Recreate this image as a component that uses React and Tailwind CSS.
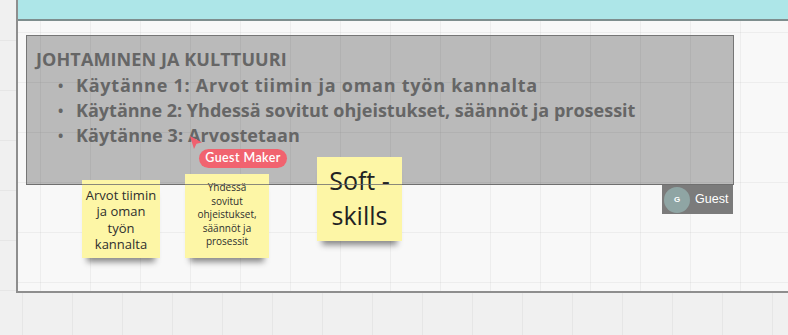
export default function App() {
  const grid =
    "bg-[linear-gradient(to_right,rgba(0,0,0,0.045)_1px,transparent_1px),linear-gradient(to_bottom,rgba(0,0,0,0.045)_1px,transparent_1px)] bg-size-[50px_50px] bg-position-[22px_40px]";
  const font = "font-['Open_Sans',sans-serif]";
  const items = [
    { t: "Käytänne 1: Arvot tiimin ja oman työn kannalta", c: "tracking-[0.75px]" },
    { t: "Käytänne 2: Yhdessä sovitut ohjeistukset, säännöt ja prosessit", c: "tracking-[0px]" },
    { t: "Käytänne 3: Arvostetaan", c: "tracking-[0.1px]" },
  ];
  return (
    <div className={`relative w-[788px] h-[335px] overflow-hidden bg-[#f0f0f0] ${grid}`}>
      {/* frame */}
      <div className="absolute left-[16px] top-[-10px] w-[790px] h-[303px] border-2 border-[#8e8e8e] bg-[#f8f8f8]">
        <div className={`h-full w-full ${grid} bg-position-[4px_48px] flex flex-col`}>
          <div className="h-[29px] bg-[#ade6e8] border-b-2 border-[#7e8e8e]" />
        </div>
      </div>

      {/* gray rectangle */}
      <div className={`absolute left-[26px] top-[35px] w-[708px] h-[150px] bg-black/25 border border-[#767676] ${font} font-bold text-[#666666]`}>
        <div className="pl-[9px] pt-[11px] text-[18px] leading-[25px]">
          <div className="tracking-[0.1px]">JOHTAMINEN JA KULTTUURI</div>
          <ul className="mt-[1px] flex flex-col">
            {items.map((it) => (
              <li key={it.t} className="flex">
                <span className="w-[40px] pl-[22px] text-[14px]">•</span>
                <span className={it.c}>{it.t}</span>
              </li>
            ))}
          </ul>
        </div>
      </div>

      {/* sticky 1 */}
      <div className={`absolute left-[82px] top-[180px] w-[78px] h-[78px] bg-[#fdf6a6] shadow-[0_9px_6px_-5px_rgba(0,0,0,0.45)] flex items-center justify-center text-center text-[13px] leading-[16.3px] text-[#2e2e2e] ${font}`}>
        <div className="pt-[1px]">
          Arvot tiimin
          <br />
          ja oman
          <br />
          työn
          <br />
          kannalta
        </div>
      </div>

      {/* sticky 2 */}
      <div className={`absolute left-[185px] top-[174px] w-[84px] h-[84px] bg-[#fdf6a6] shadow-[0_9px_6px_-5px_rgba(0,0,0,0.45)] flex items-center justify-center text-center text-[10px] leading-[13.5px] text-[#2e2e2e] ${font}`}>
        <div className="pb-[2px]">
          Yhdessä
          <br />
          sovitut
          <br />
          ohjeistukset,
          <br />
          säännöt ja
          <br />
          prosessit
        </div>
      </div>

      {/* sticky 3 */}
      <div className={`absolute left-[317px] top-[157px] w-[85px] h-[84px] bg-[#fdf6a6] shadow-[0_9px_6px_-5px_rgba(0,0,0,0.45)] flex items-center justify-center text-center text-[25px] leading-[35px] text-[#222222] ${font}`}>
        <div className="pb-[2px]">
          Soft -
          <br />
          skills
        </div>
      </div>

      {/* rect border line drawn over notes */}
      <div className="absolute left-[26px] top-[184px] w-[708px] h-px bg-[#6e6e6e]/80" />

      {/* cursor */}
      <svg className="absolute left-[189px] top-[135px]" width="16" height="16" viewBox="0 0 16 16">
        <path d="M1 1 L13 7.5 L7.5 8.8 L5 14 Z" fill="#f0606f" />
      </svg>

      {/* Guest Maker badge */}
      <div className="absolute left-[199px] top-[149px] h-[19px] w-[88px] rounded-full bg-[#f1636f] flex items-center justify-center text-white text-[12.5px] font-semibold font-['Lato',sans-serif] tracking-[0.4px]">
        Guest Maker
      </div>

      {/* Guest label */}
      <div className="absolute left-[662px] top-[185px] w-[71px] h-[29px] bg-[#7b7b7b] flex items-center pl-[2px] gap-[5px]">
        <div className="w-[26px] h-[26px] rounded-full bg-[#8fa5a4] flex items-center justify-center text-white text-[8px] font-bold font-['Liberation_Sans',sans-serif]">
          G
        </div>
        <span className="text-white text-[12.5px] font-['Liberation_Sans',sans-serif] leading-none">Guest</span>
      </div>
    </div>
  );
}
